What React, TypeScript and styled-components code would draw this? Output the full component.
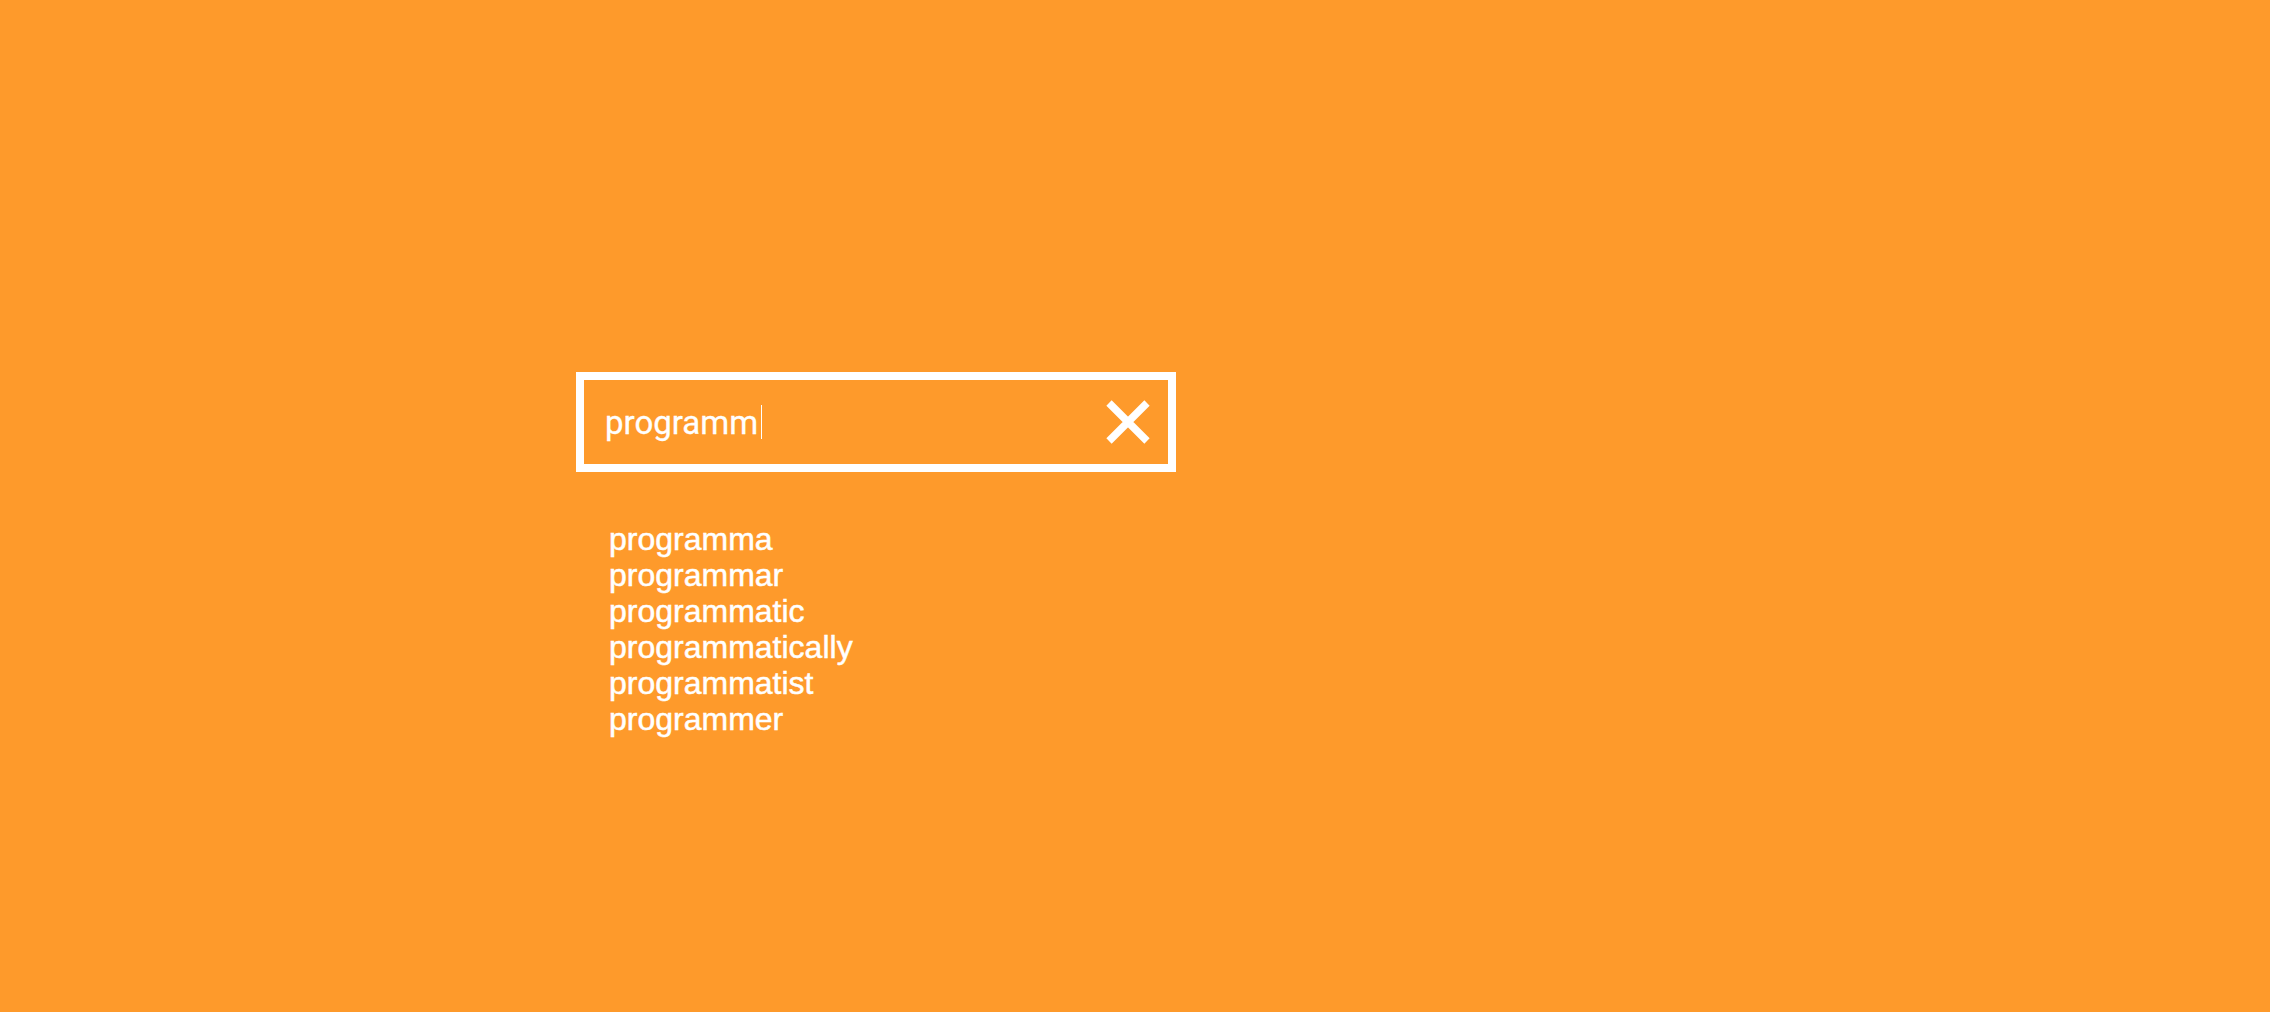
import React from "react";
import styled, { createGlobalStyle } from "styled-components";

const GlobalStyle = createGlobalStyle`
  html, body {
    margin: 0;
    padding: 0;
    background: #fe9a2b;
  }
  body {
    font-family: "Liberation Sans", Arial, sans-serif;
    color: #ffffff;
  }
`;

const Page = styled.main`
  min-height: 1012px;
  box-sizing: border-box;
  padding: 372px 0 0 576px;
  background: #fe9a2b;
`;

const SearchBox = styled.div`
  box-sizing: border-box;
  width: 600px;
  height: 100px;
  border: 8px solid #ffffff;
  display: flex;
  align-items: center;
  justify-content: space-between;
  padding: 0 18px 0 21px;
`;

const Field = styled.div`
  display: flex;
  align-items: center;
  font-family: Roboto, "Liberation Sans", sans-serif;
  font-size: 33px;
  font-weight: 400;
  -webkit-text-stroke: 0.3px #ffffff;
  color: #ffffff;
  line-height: 1;
`;

const Caret = styled.span`
  display: inline-block;
  width: 1px;
  height: 34px;
  margin-left: 3px;
  background: #ffffff;
`;

const ClearButton = styled.button`
  width: 44px;
  height: 44px;
  padding: 0;
  border: 0;
  background: transparent;
  display: flex;
  align-items: center;
  justify-content: center;
  cursor: pointer;
`;

const Suggestions = styled.ul`
  list-style: none;
  margin: 49px 0 0 0;
  padding: 0 0 0 33px;
`;

const Suggestion = styled.li`
  font-family: "Liberation Sans", Arial, sans-serif;
  font-size: 32px;
  line-height: 36px;
  color: #ffffff;
  -webkit-text-stroke: 0.5px #ffffff;
`;

const words = [
  "programma",
  "programmar",
  "programmatic",
  "programmatically",
  "programmatist",
  "programmer",
];

export default function App() {
  return (
    <>
      <GlobalStyle />
      <Page>
        <SearchBox>
          <Field>
            programm
            <Caret />
          </Field>
          <ClearButton aria-label="clear">
            <svg width="44" height="44" viewBox="0 0 44 44">
              <path d="M3 3 L41 41 M41 3 L3 41" stroke="#ffffff" strokeWidth="7.5" />
            </svg>
          </ClearButton>
        </SearchBox>
        <Suggestions>
          {words.map((w) => (
            <Suggestion key={w}>{w}</Suggestion>
          ))}
        </Suggestions>
      </Page>
    </>
  );
}
